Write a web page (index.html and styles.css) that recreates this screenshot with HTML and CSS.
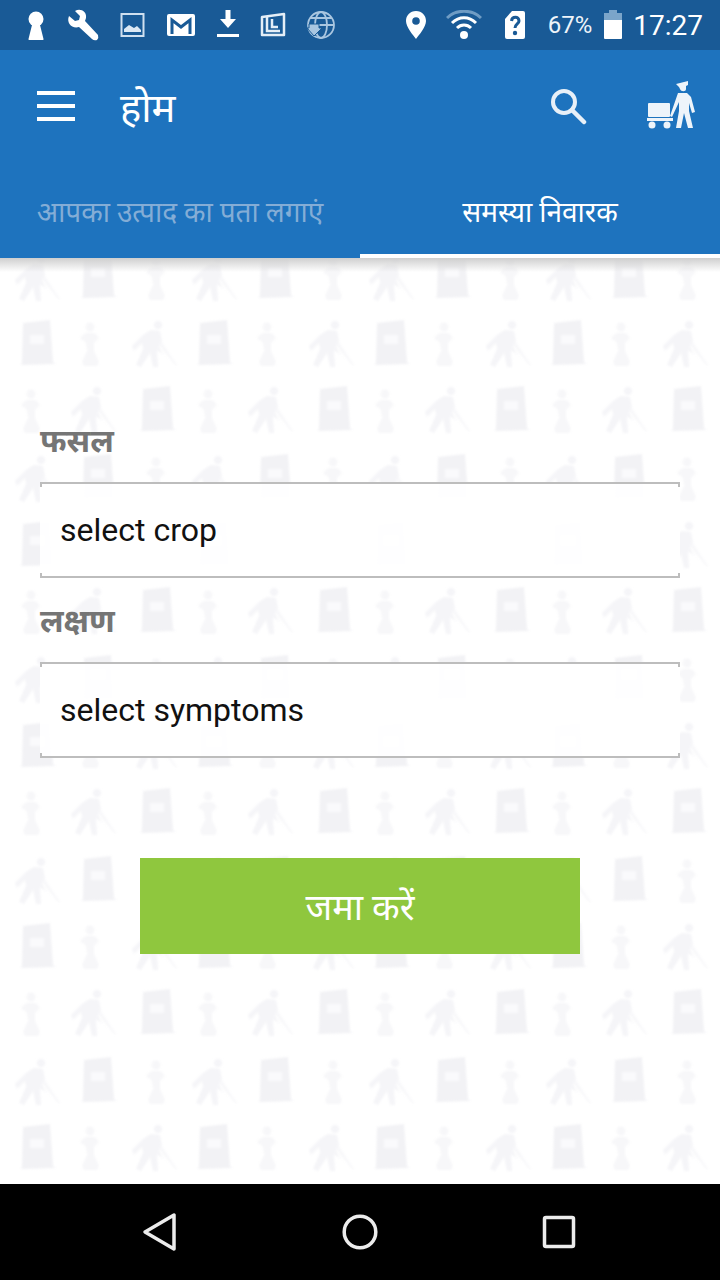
FILE: index.html
```html
<!DOCTYPE html>
<html lang="hi">
<head>
<meta charset="utf-8">
<title>होम</title>
<link rel="stylesheet" href="styles.css">
</head>
<body>
<div class="phone">
  <svg class="bg-tile" width="720" height="926" aria-hidden="true">
    <defs>
      <g id="bag"><path d="M1 3 L28 0 L31 42 L33 44 L-1 45 L0 42Z" fill="#f2f2f5"/><rect x="8" y="15" width="14" height="9" fill="#fafafc"/></g>
      <g id="walker" fill="#f5f5f8"><circle cx="25" cy="4" r="4"/><path d="M18 9 L27 10 L29 20 L26 26 L31 34 L24 29 L25 46 L20 46 L17 32 L8 46 L3 44 L10 28 L9 22 L1 30 L-1 25 L10 14Z"/><path d="M28 20 L44 44 L43 45 L26 24Z" fill="#f8f8fa"/></g>
      <g id="kid" fill="#f7f7f9"><circle cx="11" cy="5" r="4.500"/><path d="M6 11 L16 11 L20 16 L15 21 L15 29 L20 40 L18 44 L5 44 L3 40 L8 29 L7 21 L1 16Z"/></g>
      <pattern id="tile" x="0" y="-5" width="177" height="201" patternUnits="userSpaceOnUse">
        <use href="#walker" x="16" y="2"/>
        <use href="#bag" x="83" y="0"/>
        <use href="#kid" x="145" y="3"/>
        <use href="#bag" x="22" y="67"/>
        <use href="#kid" x="79" y="69"/>
        <use href="#walker" x="133" y="68"/>
        <use href="#kid" x="20" y="136"/>
        <use href="#kid" x="197" y="136"/>
        <use href="#walker" x="72" y="134"/>
        <use href="#bag" x="142" y="133"/>
      </pattern>
    </defs>
    <rect width="720" height="926" fill="url(#tile)"/>
  </svg>

  <header class="appbar">
    <div class="statusbar">
      <div class="status-left">
        <svg class="si" width="20" height="32" viewBox="0 0 20 32"><circle cx="10" cy="10" r="7.500" fill="#fff"/><path d="M7 12 L13 12 L17.500 30 Q17.600 31 17 31 L3 31 Q2.400 31 2.500 30Z" fill="#fff"/></svg>
        <svg class="si" width="34" height="34" viewBox="0 0 34 34"><path d="M3 8 L9 13 L13 12 L14 8 L9 3 C14 0 21 3 20 10 L19 13 L32 27 Q33 30 31 32 Q28 33 26 31 L13 19 C6 21 0 15 3 8Z" fill="#fff"/></svg>
        <svg class="si" width="26" height="26" viewBox="0 0 26 26"><rect x="1.500" y="2" width="22" height="22" fill="none" stroke="#cfe0f0" stroke-width="2"/><path d="M4 20 V17 L9 13 L14 16 L17 14 L21 18 V20Z" fill="#dbe8f4"/></svg>
        <svg class="si" width="30" height="26" viewBox="0 0 30 26"><rect x="1" y="2" width="28" height="22" rx="2" fill="#fff"/><path d="M6 22 V8 L15 15 L24 8 V22" fill="none" stroke="#195a96" stroke-width="3"/></svg>
        <svg class="si" width="24" height="32" viewBox="0 0 24 32"><path d="M9.500 1 H14.500 V10 H20 L12 19 L4 10 H9.500Z M1 25 H23 V28 H1Z" fill="#fff"/></svg>
        <svg class="si" width="26" height="26" viewBox="0 0 26 26"><path d="M2 5 L24 2 V23 L2 23Z" fill="none" stroke="#e4eef7" stroke-width="2.500" stroke-linejoin="round"/><path d="M7 5 V19 H20 M12 7 V15 H18" fill="none" stroke="#e4eef7" stroke-width="2.500"/></svg>
        <svg class="si" width="30" height="30" viewBox="0 0 30 30"><g fill="none" stroke="#a9c6e0" stroke-width="1.800"><circle cx="15" cy="15" r="13"/><ellipse cx="15" cy="15" rx="6" ry="13"/><path d="M2 15 H28 M4 8 H26"/></g><path d="M3 14 H13 V18 H16 L8 26 L1 18 H3Z" fill="#a9c6e0" stroke="#195a96"/></svg>
      </div>
      <div class="status-right">
        <svg class="si" width="22" height="30" viewBox="0 0 22 30"><path d="M11 1 C5 1 1 5.500 1 11 C1 17 8 25 11 29 C14 25 21 17 21 11 C21 5.500 17 1 11 1Z" fill="#fff"/><circle cx="11" cy="11" r="3.800" fill="#195a96"/></svg>
        <svg class="si wifi" width="36" height="30" viewBox="0 0 36 30"><g fill="none" stroke-width="3"><path d="M1 8 C10 -1 26 -1 35 8" stroke="#6f9cc4"/><path d="M6 13 C13 6 23 6 30 13 M11 18 C15 14 21 14 25 18" stroke="#fff"/></g><circle cx="18" cy="25" r="4" fill="#fff"/></svg>
        <svg class="si sim" width="22" height="30" viewBox="0 0 22 30"><path d="M8 1 H19 Q21 1 21 3 V27 Q21 29 19 29 H3 Q1 29 1 27 V9Z" fill="#fff"/><path d="M7.500 11 C8 6 15 6 15 11 C15 14 11 14 11 18" fill="none" stroke="#195a96" stroke-width="3"/><circle cx="11" cy="23" r="2.200" fill="#195a96"/></svg>
        <span class="pct">67%</span>
        <svg class="si batt" width="20" height="30" viewBox="0 0 20 30"><path d="M6 0 H14 V3 H19 V10 H1 V3 H6Z" fill="#7ba5ca"/><path d="M1 10 H19 V28 Q19 29 18 29 H2 Q1 29 1 28Z" fill="#fff"/></svg>
        <span class="clock">17:27</span>
      </div>
    </div>

    <div class="toolbar">
      <div class="menu"><i></i><i></i><i></i></div>
      <div class="title">होम</div>
      <svg class="search" width="38" height="38" viewBox="0 0 38 38"><circle cx="15" cy="15" r="11" fill="none" stroke="#e8f0f8" stroke-width="4"/><path d="M23 23 L35 35" stroke="#e8f0f8" stroke-width="4.500" stroke-linecap="round"/></svg>
      <svg class="porter" width="50" height="50" viewBox="0 0 50 50">
        <g fill="#eef4fa"><path d="M29 3 L41 0 L41 4 L39 5 L39 8 C39 11 34 11 33 8 L32 6Z"/><path d="M31 12 L40 12 L44 16 L48 31 L45 32 L42 22 L42 30 L46 47 L41 47 L37 32 L34 47 L29 47 L32 30 L32 21 L25 36 L23 35Z"/><rect x="1" y="22" width="22" height="14" rx="1"/><path d="M0 37 H26 V40 H0Z"/><circle cx="5" cy="44" r="3.500"/><circle cx="20" cy="44" r="3.500"/></g>
      </svg>
    </div>

    <nav class="tabs">
      <div class="tab">आपका उत्पाद का पता लगाएं</div>
      <div class="tab tab-active">समस्या निवारक</div>
    </nav>
  </header>
  <div class="shadow"></div>

  <main class="form">
    <label class="label">फसल</label>
    <div class="field">select crop</div>
    <label class="label label-second">लक्षण</label>
    <div class="field">select symptoms</div>
    <button class="submit">जमा करें</button>
  </main>

  <footer class="navbar">
    <svg width="36" height="40" viewBox="0 0 36 40"><path d="M32 3 V37 L3 20Z" fill="none" stroke="#ececec" stroke-width="3.500" stroke-linejoin="round"/></svg>
    <svg width="36" height="36" viewBox="0 0 36 36"><circle cx="18" cy="18" r="15.800" fill="none" stroke="#ececec" stroke-width="3.500"/></svg>
    <svg width="34" height="34" viewBox="0 0 34 34"><rect x="2.500" y="2.500" width="29" height="29" rx="1.500" fill="none" stroke="#ececec" stroke-width="3.500"/></svg>
  </footer>
</div>
</body>
</html>
```

FILE: styles.css
```css
* { box-sizing: border-box; }
html, body { margin: 0; padding: 0; }
body {
  width: 720px;
  height: 1280px;
  overflow: hidden;
  background: #fff;
  font-family: Roboto, "Noto Sans", "Noto Sans Devanagari", sans-serif;
}
.phone {
  position: relative;
  width: 720px;
  height: 1280px;
  display: flex;
  flex-direction: column;
  background: #fff;
}
.bg-tile {
  position: absolute;
  left: 0;
  top: 258px;
  filter: blur(1px);
}
.appbar {
  position: relative;
  height: 258px;
  background: #1e73be;
  display: flex;
  flex-direction: column;
}
.statusbar {
  height: 50px;
  background: #195a96;
  display: flex;
  justify-content: space-between;
  align-items: center;
  color: #fff;
}
.status-left {
  display: flex;
  align-items: center;
  gap: 20px;
  padding-left: 26px;
}
.status-right {
  display: flex;
  align-items: center;
  padding-right: 17px;
}
.si { display: block; flex: none; }
.wifi { margin-left: 19px; }
.sim { margin-left: 22px; }
.pct {
  margin-left: 22px;
  font-size: 24px;
  color: #eef4fa;
}
.batt { margin-left: 11px; }
.clock {
  margin-left: 10px;
  font-size: 28px;
  color: #fff;
}
.toolbar {
  height: 112px;
  display: flex;
  align-items: center;
  padding-left: 37px;
  padding-right: 23px;
}
.menu {
  width: 38px;
  display: flex;
  flex-direction: column;
  gap: 9px;
}
.menu i {
  display: block;
  height: 4px;
  background: #fff;
}
.title {
  margin-left: 45px;
  font-size: 40px;
  color: #fff;
  flex: 1;
}
.search { margin-right: 60px; }
.tabs {
  flex: 1;
  display: flex;
}
.tab {
  width: 360px;
  text-align: center;
  font-size: 28px;
  color: #84add6;
  padding-top: 30px;
}
.tab-active {
  color: #fff;
  border-bottom: 4px solid #fff;
}
.shadow {
  position: absolute;
  left: 0;
  top: 258px;
  width: 720px;
  height: 14px;
  background: linear-gradient(#cfcfcf, rgba(255,255,255,0));
}
.form {
  position: relative;
  flex: 1;
  padding: 161px 40px 0;
  display: flex;
  flex-direction: column;
}
.label {
  font-size: 32px;
  font-weight: 700;
  color: #757575;
  height: 44px;
  line-height: 44px;
  margin-bottom: 19px;
}
.label-second { margin-top: 21px; }
.field {
  position: relative;
  height: 96px;
  border-top: 2px solid #bdbdbd;
  border-bottom: 2px solid #bdbdbd;
  padding-left: 20px;
  font-size: 32px;
  color: #111;
  display: flex;
  align-items: center;
  background: rgba(255,255,255,.92);
}
.field::before,
.field::after {
  content: "";
  position: absolute;
  top: -2px;
  bottom: -2px;
  width: 2px;
  background: linear-gradient(#bdbdbd 5px, transparent 5px, transparent calc(100% - 5px), #bdbdbd calc(100% - 5px));
}
.field::before { left: 0; }
.field::after { right: 0; }
.submit {
  align-self: center;
  margin-top: 100px;
  width: 440px;
  height: 96px;
  border: 0;
  background: #8fc73e;
  color: #fff;
  font: inherit;
  font-size: 36px;
}
.navbar {
  height: 96px;
  background: #000;
  display: flex;
  align-items: center;
  justify-content: space-between;
  padding: 0 144px 0 142px;
}
```
